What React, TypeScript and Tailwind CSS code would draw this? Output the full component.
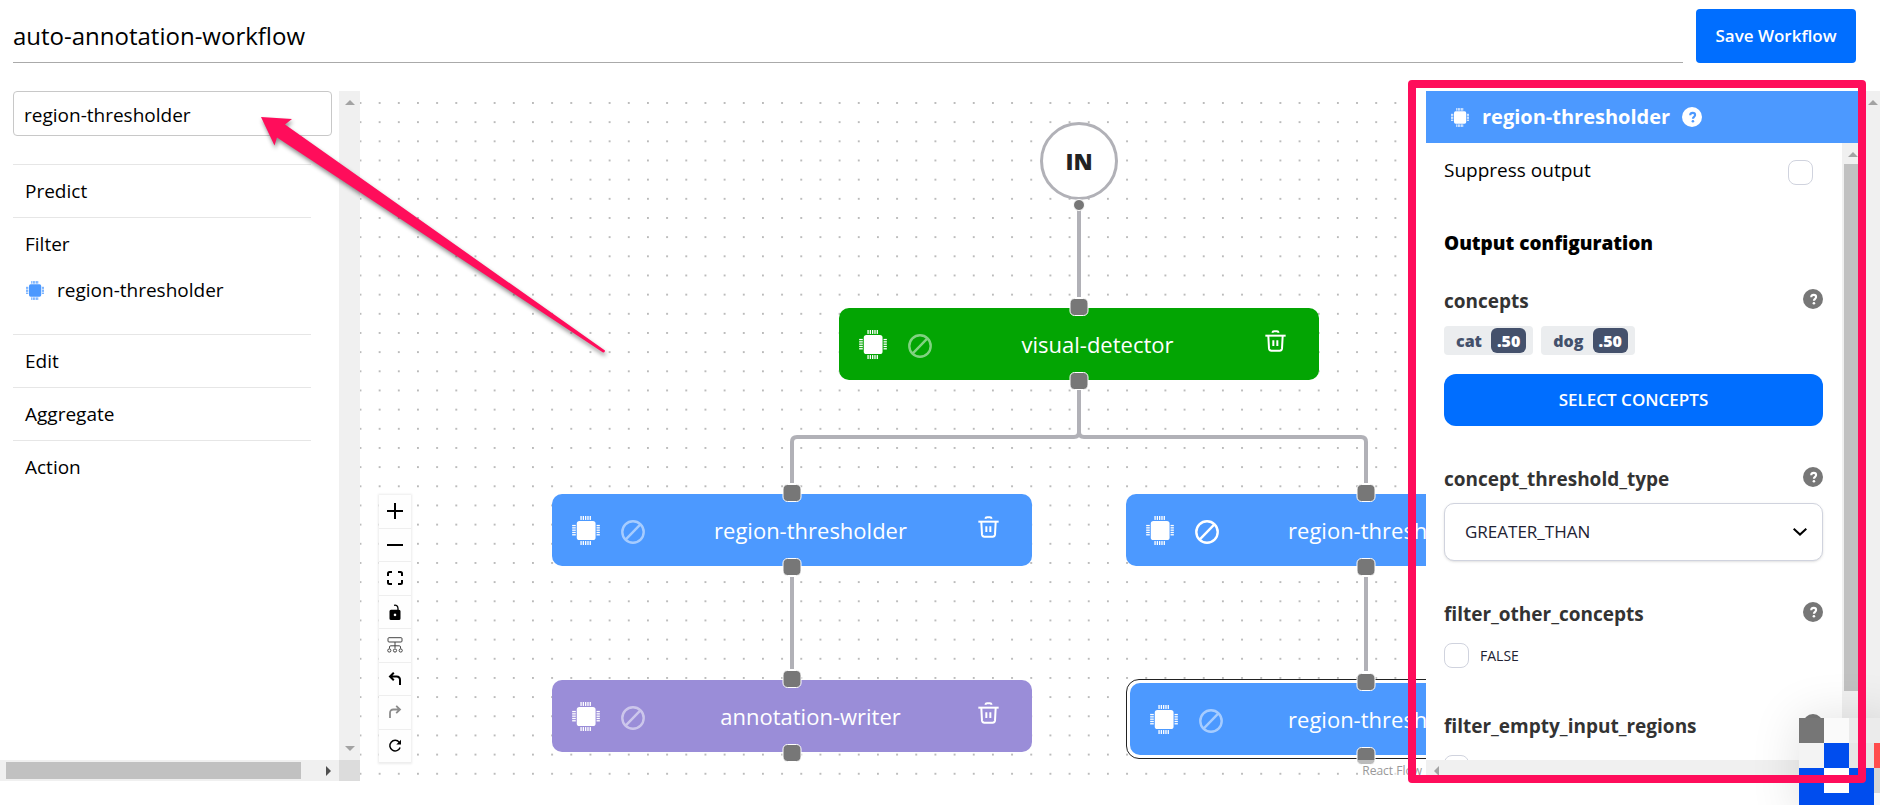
import React from "react";

const PINS = [26, 33, 40, 47, 54];

function Chip({ className }: { className: string }) {
  return (
    <svg viewBox="0 0 84 88" className={className} fill="currentColor" aria-hidden="true">
      <rect x="14" y="15" width="57" height="58" rx="8" />
      {PINS.map((p) => (
        <g key={p}>
          <rect x={p - 1} y="0" width="4" height="12" />
          <rect x={p - 1} y="76" width="4" height="12" />
          <rect x="0" y={p + 1} width="11" height="4" />
          <rect x="74" y={p + 1} width="10" height="4" />
        </g>
      ))}
    </svg>
  );
}

function Blocked({ className }: { className: string }) {
  return (
    <svg viewBox="0 0 24 24" className={className} fill="none" stroke="currentColor" strokeWidth="2.4" aria-hidden="true">
      <circle cx="12" cy="12" r="10.700" />
      <path d="M4.600 19.600 19.400 4.400" />
    </svg>
  );
}

function Trash() {
  return (
    <svg viewBox="0 0 63 66" className="h-[22px] w-[21px]" fill="none" stroke="currentColor" strokeWidth="6" aria-hidden="true">
      <path d="M22 8Q23 4 27 4h9q4 0 5 4" />
      <path d="M1 17h61" />
      <path d="M10 18l2 38q1 6 7 6h25q6 0 7-6l2-38" />
      <path d="M25 31v17M37 31v17" />
    </svg>
  );
}

function Help({ className }: { className: string }) {
  return (
    <svg viewBox="0 0 20 20" className={className} aria-hidden="true">
      <circle cx="10" cy="10" r="10" fill="currentColor" />
      <path
        d="M8.200 8.200c.1-1.600 1.200-2.300 2.500-2.300 1.400 0 2.400.8 2.400 2.100 0 1.800-2.200 1.900-2.200 3.800"
        fill="none"
        className="stroke-[var(--mark)]"
        strokeWidth="2.100"
      />
      <circle cx="10.900" cy="14.300" r="1.300" className="fill-[var(--mark)]" />
    </svg>
  );
}

function Tri({ dir }: { dir: "up" | "down" | "left" | "right" }) {
  const paths = { up: "M0 5 5 0l5 5z", down: "M0 0h10L5 5z", left: "M5 0v10L0 5z", right: "M0 0v10l5-5z" };
  const flat = dir === "up" || dir === "down";
  return (
    <svg
      viewBox={flat ? "0 0 10 5" : "0 0 5 10"}
      className={flat ? "h-[5px] w-[10px]" : "h-[10px] w-[5px]"}
      fill={dir === "right" ? "#505050" : "#a3a3a3"}
      aria-hidden="true"
    >
      <path d={paths[dir]} />
    </svg>
  );
}

function Sidebar() {
  const item = "flex h-[53px] w-full items-center border-t border-[#e6e6e6] px-3 text-left text-[19px] leading-7";
  return (
    <aside className="flex w-[360px] shrink-0 flex-col">
      <div className="flex min-h-0 flex-1">
        <div className="min-w-0 flex-1 overflow-hidden pl-[13px]">
          <input
            aria-label="Search operators"
            defaultValue="region-thresholder"
            className="h-[45px] w-[319px] rounded-[4px] border border-[#c8c8c8] px-[10px] pt-[2px] text-[19px] outline-none"
          />
          <nav className="mt-7 w-[298px]">
            <button className={item}>Predict</button>
            <div className="h-[117px]">
              <button className={item}>Filter</button>
              <button className="flex h-10 items-center gap-[13px] pl-[13px] text-[19px] leading-7">
                <Chip className="h-[19px] w-[18px] text-[#4c99ff]" />
                region-thresholder
              </button>
            </div>
            <button className={item}>Edit</button>
            <button className={item}>Aggregate</button>
            <button className={item}>Action</button>
          </nav>
        </div>
        <div className="flex w-[21px] flex-col items-center justify-between bg-[#f0f0f0] py-[9px]">
          <Tri dir="up" />
          <Tri dir="down" />
        </div>
      </div>
      <div className="flex h-[21px]">
        <div className="flex flex-1 items-center justify-between bg-[#f0f0f0] pr-2 pl-[6px]">
          <div className="h-[17px] w-[295px] bg-[#c1c1c1]" />
          <Tri dir="right" />
        </div>
        <div className="w-[21px] bg-[#dcdcdc]" />
      </div>
    </aside>
  );
}

function Handle({ edge }: { edge: "top" | "bottom" }) {
  return (
    <span
      className={
        "absolute left-1/2 h-[18px] w-[19px] -translate-x-1/2 rounded-[5px] border border-white bg-[#777] " +
        (edge === "top" ? "-top-[10px]" : "-bottom-[10px]")
      }
    />
  );
}

type NodeProps = { label: string; place: string; color: string; selected?: boolean; blocked?: boolean };

function FlowNode({ label, place, color, selected, blocked }: NodeProps) {
  return (
    <div className={`absolute w-[480px] ${place} ${selected ? "rounded-[13px] border border-[#222] bg-white p-[3px]" : ""}`}>
      <div className={`relative flex h-[72px] items-center rounded-[10px] pr-[33px] pl-5 text-white ${color}`}>
        <Chip className="h-[29px] w-[28px]" />
        <Blocked className={`mt-1 ml-[21px] size-6 ${blocked ? "" : "opacity-50"}`} />
        <span className="flex-1 pr-[2px] text-center text-[22px] leading-8">{label}</span>
        <button aria-label="Delete node" className="mb-[7px]">
          <Trash />
        </button>
        <Handle edge="top" />
        <Handle edge="bottom" />
      </div>
    </div>
  );
}

function Controls() {
  const b = "flex items-center justify-center border-b border-[#eee] bg-[#fefefe]";
  return (
    <div className="absolute bottom-[18px] left-[19px] grid h-[268px] w-8 grid-rows-8 shadow-[0_0_2px_1px_rgba(0,0,0,0.08)]">
      <button aria-label="Zoom in" className={b}>
        <svg viewBox="0 0 16 16" className="size-4" stroke="#000" strokeWidth="2"><path d="M8 0v16M0 8h16" /></svg>
      </button>
      <button aria-label="Zoom out" className={b}>
        <svg viewBox="0 0 16 16" className="size-4" stroke="#000" strokeWidth="2"><path d="M0 8h16" /></svg>
      </button>
      <button aria-label="Fit view" className={b}>
        <svg viewBox="0 0 16 14" className="h-[14px] w-4" fill="none" stroke="#000" strokeWidth="2">
          <path d="M1 5V2.500Q1 1 2.500 1H5M11 1h2.500Q15 1 15 2.500V5M15 9v2.500q0 1.500-1.500 1.500H11M5 13H2.500Q1 13 1 11.500V9" />
        </svg>
      </button>
      <button aria-label="Lock" className={b}>
        <svg viewBox="0 0 14 16" className="h-4 w-[14px]">
          <path d="M6 1.300Q9.800.6 10 4.500V6" fill="none" stroke="#000" strokeWidth="1.300" />
          <path fillRule="evenodd" d="M3 5.800h8q1.500 0 1.500 1.500V14.500q0 1.500-1.500 1.500H3q-1.500 0-1.500-1.500V7.300q0-1.500 1.500-1.500zM7 9.600a1.300 1.300 0 1 0 .01 0z" />
        </svg>
      </button>
      <button aria-label="Arrange" className={b}>
        <svg viewBox="0 0 16 16" className="size-4" fill="none" stroke="#444" strokeWidth="1">
          <rect x="1" y=".7" width="14" height="4.300" rx="1" />
          <path d="M8 5v6M2.500 11.500V10q0-1.200 1.200-1.200h8.600q1.200 0 1.200 1.200v1.500" />
          <circle cx="2.300" cy="13.500" r="1.600" />
          <circle cx="8" cy="13.500" r="1.600" />
          <circle cx="13.700" cy="13.500" r="1.600" />
        </svg>
      </button>
      <button aria-label="Undo" className={b}>
        <svg viewBox="0 0 14 14" className="size-[14px]" fill="none" stroke="#000" strokeWidth="2">
          <path d="M2 4.500h6.500q3.500 0 3.500 3.500v5M5.800.8 2 4.500l3.800 3.700" />
        </svg>
      </button>
      <button aria-label="Redo" className={b}>
        <svg viewBox="0 0 14 14" className="size-[14px]" fill="none" stroke="#8c8c8c" strokeWidth="1.800">
          <path d="M12 4.500H5.500Q2 4.500 2 8v5M8.200.8 12 4.500 8.200 8.200" />
        </svg>
      </button>
      <button aria-label="Reset" className={b}>
        <svg viewBox="0 0 14 14" className="size-[14px]" fill="none" stroke="#000" strokeWidth="1.500">
          <path d="M11.300 3.400A5.300 5.300 0 1 0 12.100 8.500" />
          <path d="M13 .8V5.500H8.300z" fill="#000" stroke="none" />
        </svg>
      </button>
    </div>
  );
}

function Canvas() {
  return (
    <main className="relative min-w-0 flex-1 overflow-hidden bg-white">
      <svg className="absolute inset-0 h-full w-full" aria-hidden="true">
        <defs>
          <pattern id="dots" x="-9.100" y="2.400" width="19.165" height="19.165" patternUnits="userSpaceOnUse">
            <circle cx="9.580" cy="9.580" r="1" fill="#a8a8a8" />
          </pattern>
        </defs>
        <rect width="100%" height="100%" fill="url(#dots)" />
        <g fill="none" stroke="#b1b1b7" strokeWidth="4">
          <path d="M719 119V206" />
          <path d="M719 299v42q0 5-5 5H437q-5 0-5 5v41" />
          <path d="M719 299v42q0 5 5 5h277q5 0 5 5v41" />
          <path d="M432 486v92M1006 486v94" />
        </g>
      </svg>
      <div className="absolute top-[31px] left-[680px] flex size-[78px] items-center justify-center rounded-full border-3 border-[#b1b1b7] bg-white text-[23px] font-extrabold text-[#222]">
        IN
      </div>
      <span className="absolute top-[108px] left-[713px] size-3 rounded-full border border-white bg-[#777]" />
      <FlowNode label="visual-detector" place="top-[217px] left-[479px]" color="bg-[#03a503]" />
      <FlowNode label="region-thresholder" place="top-[403px] left-[192px]" color="bg-[#4c99ff]" />
      <FlowNode label="annotation-writer" place="top-[589px] left-[192px]" color="bg-[#9a8dd8]" />
      <FlowNode label="region-thresholder" place="top-[403px] left-[766px]" color="bg-[#4c99ff]" blocked />
      <FlowNode label="region-thresholder" place="top-[588px] left-[766px]" color="bg-[#4c99ff]" selected />
      <Controls />
      <a href="#react-flow" className="absolute right-0 bottom-0 bg-white/50 px-1 text-[12px] leading-[21px] text-[#999]">
        React Flow
      </a>
    </main>
  );
}

function Heading({ children }: { children: string }) {
  return (
    <div className="flex justify-between">
      <h3 className="text-[19px] leading-6 font-bold text-[#333]">{children}</h3>
      <button aria-label={`About ${children}`} className="size-5 text-[#777] [--mark:#fff]">
        <Help className="size-5" />
      </button>
    </div>
  );
}

function Tag({ name }: { name: string }) {
  return (
    <span className="flex h-[29px] items-center gap-[9px] rounded-[4px] bg-[#ebedef] pr-[7px] pl-3 text-[16px] font-extrabold text-[#44516c]">
      {name}
      <span className="flex h-[25px] items-center rounded-[6px] bg-[#44516c] px-[6px] text-white">.50</span>
    </span>
  );
}

const check = "size-[25px] appearance-none rounded-[8px] border border-[#d0d3de] bg-white";

function Panel() {
  return (
    <aside className="relative flex w-[454px] shrink-0">
      <div className="flex min-w-0 flex-1 flex-col bg-white">
        <header className="flex h-[52px] shrink-0 items-center bg-[#4c99ff] pl-[25px] text-white">
          <Chip className="h-[19px] w-[18px]" />
          <h2 className="ml-[13px] text-[20px] leading-6 font-bold">region-thresholder</h2>
          <button aria-label="About this model" className="ml-3 size-5 text-white [--mark:#4c99ff]">
            <Help className="size-5" />
          </button>
        </header>
        <div className="flex min-h-0 flex-1">
          <div className="min-w-0 flex-1 overflow-hidden pr-[19px] pl-[18px]">
            <div className="flex h-[84px] items-start justify-between pt-[15px] pr-[10px]">
              <label htmlFor="suppress" className="text-[19px] leading-6">Suppress output</label>
              <input id="suppress" type="checkbox" className={`${check} mt-[2px]`} />
            </div>
            <h2 className="mt-1 text-[19px] leading-6 font-extrabold text-black">Output configuration</h2>
            <div className="mt-[34px]">
              <Heading>concepts</Heading>
            </div>
            <div className="mt-[13px] flex gap-2">
              <Tag name="cat" />
              <Tag name="dog" />
            </div>
            <button className="mt-[19px] h-[52px] w-full rounded-[12px] bg-[#006eff] text-[17px] font-semibold text-white">
              SELECT CONCEPTS
            </button>
            <div className="mt-[41px]">
              <Heading>concept_threshold_type</Heading>
            </div>
            <div className="relative mt-3">
              <select
                aria-label="concept_threshold_type"
                className="h-[58px] w-full appearance-none rounded-[10px] border border-[#d0d3de] bg-white px-5 text-[17px] text-[#223] shadow-sm"
              >
                <option>GREATER_THAN</option>
              </select>
              <svg viewBox="0 0 14 8" className="pointer-events-none absolute top-[25px] right-4 h-2 w-[14px]" fill="none" stroke="#000" strokeWidth="2" aria-hidden="true">
                <path d="M.7.8 7 6.600 13.300.8" />
              </svg>
            </div>
            <div className="mt-[41px]">
              <Heading>filter_other_concepts</Heading>
            </div>
            <label className="mt-[17px] flex items-center gap-[11px] text-[14px] text-[#223]">
              <input type="checkbox" className={check} />
              FALSE
            </label>
            <div className="mt-[46px]">
              <Heading>filter_empty_input_regions</Heading>
            </div>
            <input type="checkbox" aria-label="filter_empty_input_regions" className={`${check} mt-[17px]`} />
          </div>
          <div className="flex w-6 flex-col bg-[#f0f0f0] pt-[9px] pl-[2px]">
            <div className="pl-1">
              <Tri dir="up" />
            </div>
            <div className="mt-[7px] h-[527px] w-[17px] bg-[#c1c1c1]" />
          </div>
        </div>
        <div className="flex h-[21px] shrink-0 items-center bg-[#f0f0f0] pl-2">
          <Tri dir="left" />
        </div>
      </div>
      <div className="flex w-[14px] flex-col items-center bg-[#f0f0f0] pt-[9px]">
        <Tri dir="up" />
      </div>
    </aside>
  );
}

const TILES = [
  "bg-[#767676]", "bg-[#fafafa]", "bg-[#ebebeb]", "bg-[#ebebeb]",
  "bg-[#f3f3f3]", "bg-[#004dee]", "bg-[#e6e6e6]", "bg-[#ff4c4c]",
  "bg-[#004dee]", "bg-white", "bg-[#004dee]", "bg-[#d6d6d6]",
  "bg-[#004dee]", "bg-[#004dee]", "bg-[#004dee]", "bg-[#f7f7f7]",
];

export default function App() {
  return (
    <div className="relative flex h-screen flex-col overflow-hidden bg-white pb-6 font-['Open_Sans',sans-serif] text-black">
      <header className="flex h-[91px] shrink-0 items-start gap-[13px] pt-[9px] pr-6 pl-[13px]">
        <input
          aria-label="Workflow name"
          defaultValue="auto-annotation-workflow"
          className="h-[54px] min-w-0 flex-1 border-b border-[#aaa] text-[24px] outline-none"
        />
        <button className="h-[54px] w-40 rounded-[4px] bg-[#006eff] text-[17px] font-semibold text-white">Save Workflow</button>
      </header>
      <div className="flex min-h-0 flex-1">
        <Sidebar />
        <Canvas />
        <Panel />
      </div>
      <div className="absolute right-[-19px] bottom-[-13px] grid grid-cols-4 shadow-[0_0_50px_rgba(0,0,0,0.12)]" aria-hidden="true">
        {TILES.map((t, i) => (
          <span key={i} className={`size-[25px] ${t}`} />
        ))}
      </div>
      <div className="pointer-events-none absolute top-20 right-[14px] bottom-[22px] w-[458px] rounded-[4px] border-8 border-[#ff0d5b]" />
      <svg viewBox="0 0 360 250" className="pointer-events-none absolute top-[110px] left-[255px] h-[250px] w-[360px]" aria-hidden="true">
        <path
          d="M6 7 37 9 30 14.500 350 240.500Q350 243 348 242.500L22 27.500 19.500 35.500z"
          fill="#ff0d5b"
          className="drop-shadow-[1px_3px_2px_rgba(0,0,0,0.45)]"
        />
      </svg>
    </div>
  );
}
